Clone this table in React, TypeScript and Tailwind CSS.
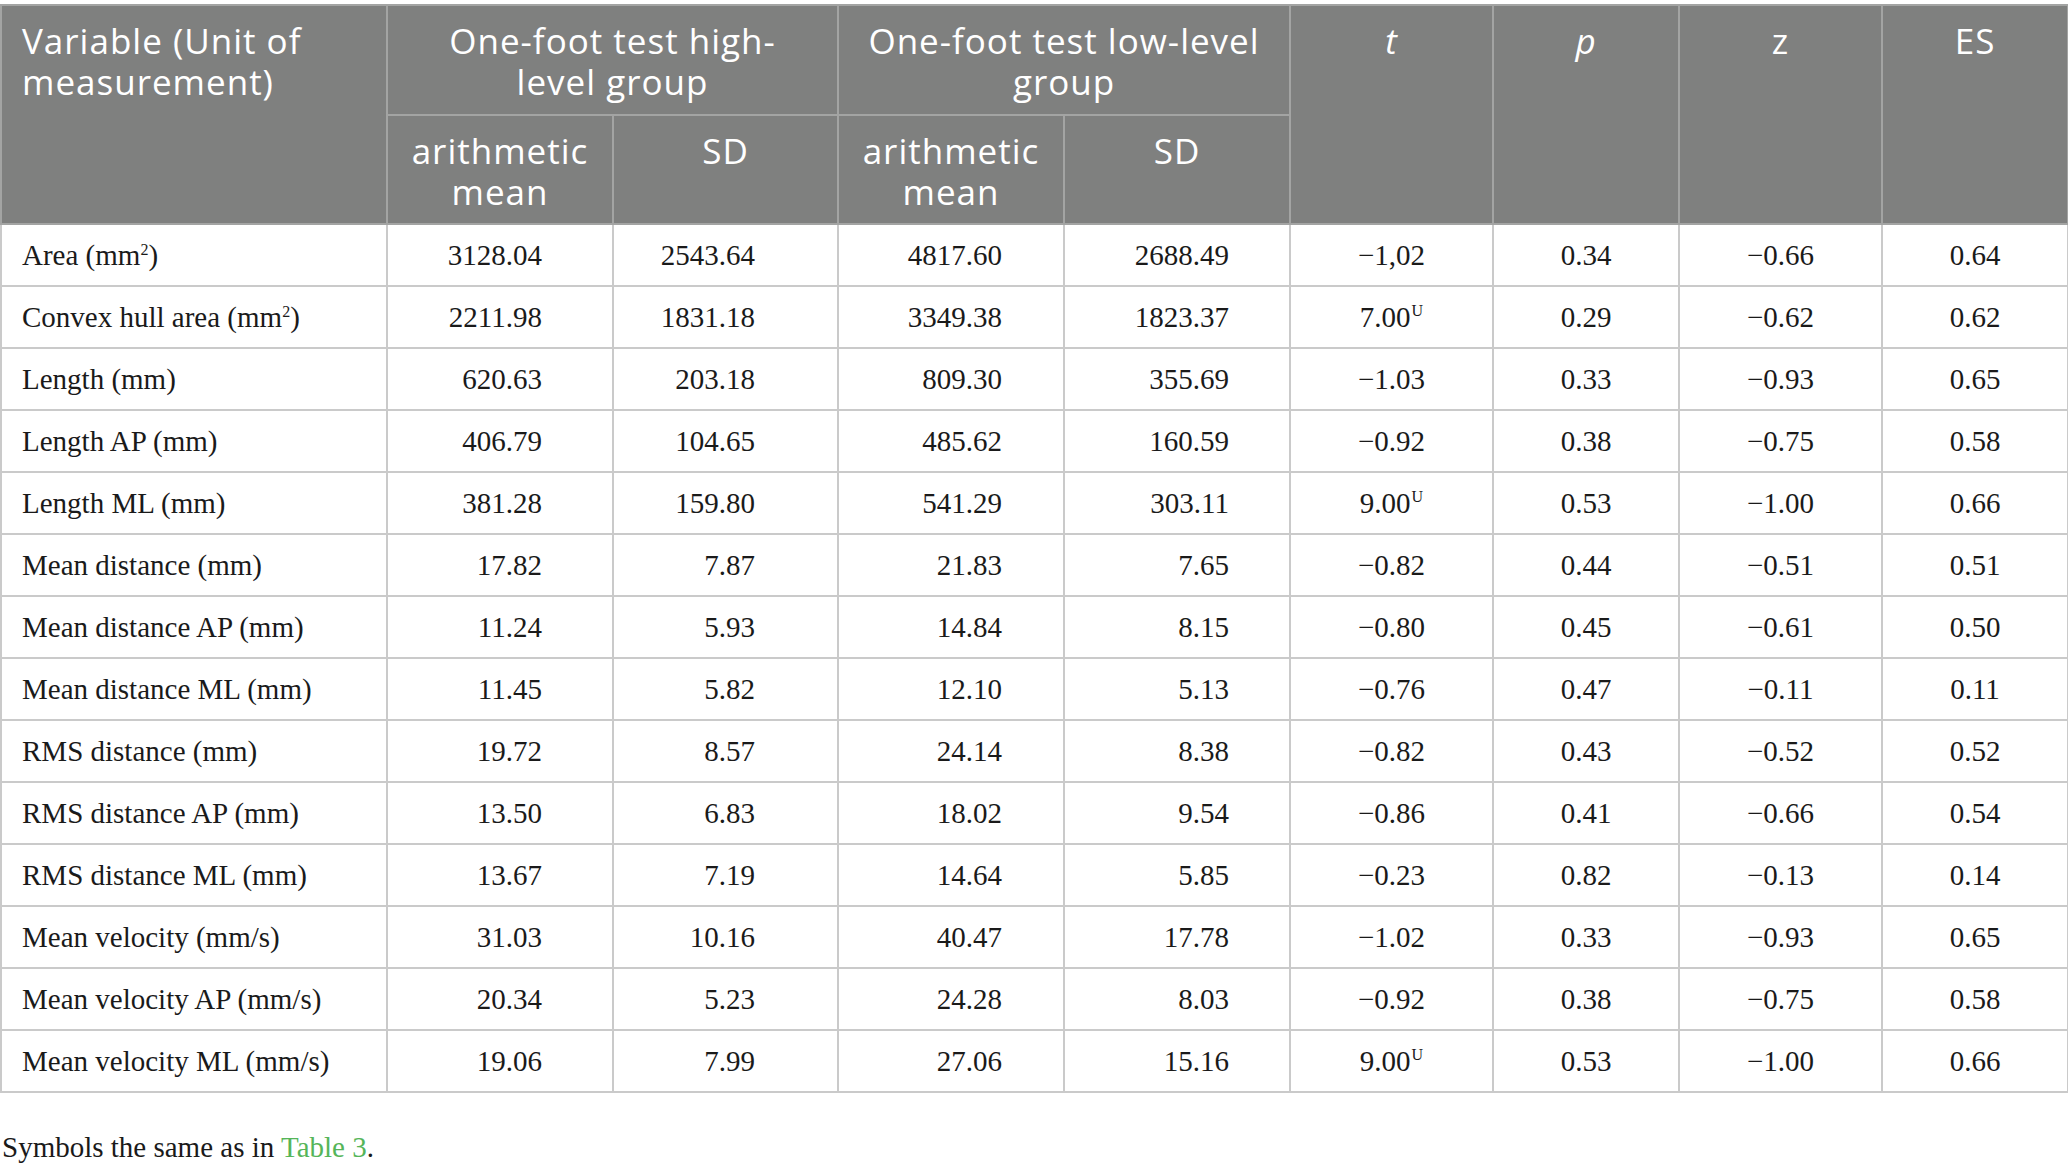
import React from "react";

type Row = {
  label: React.ReactNode;
  v: [string, string, string, string];
  t: React.ReactNode;
  p: string;
  z: string;
  es: string;
};

const U = (n: string) => (
  <>
    {n}
    <span className="text-[16px] relative top-[-11px] ml-[1px]">U</span>
  </>
);
const mm2 = (s: string) => (
  <>
    {s} (mm<span className="text-[16px] relative top-[-10px]">2</span>)
  </>
);

const rows: Row[] = [
  { label: mm2("Area"), v: ["3128.04", "2543.64", "4817.60", "2688.49"], t: "−1,02", p: "0.34", z: "−0.66", es: "0.64" },
  { label: mm2("Convex hull area"), v: ["2211.98", "1831.18", "3349.38", "1823.37"], t: U("7.00"), p: "0.29", z: "−0.62", es: "0.62" },
  { label: "Length (mm)", v: ["620.63", "203.18", "809.30", "355.69"], t: "−1.03", p: "0.33", z: "−0.93", es: "0.65" },
  { label: "Length AP (mm)", v: ["406.79", "104.65", "485.62", "160.59"], t: "−0.92", p: "0.38", z: "−0.75", es: "0.58" },
  { label: "Length ML (mm)", v: ["381.28", "159.80", "541.29", "303.11"], t: U("9.00"), p: "0.53", z: "−1.00", es: "0.66" },
  { label: "Mean distance (mm)", v: ["17.82", "7.87", "21.83", "7.65"], t: "−0.82", p: "0.44", z: "−0.51", es: "0.51" },
  { label: "Mean distance AP (mm)", v: ["11.24", "5.93", "14.84", "8.15"], t: "−0.80", p: "0.45", z: "−0.61", es: "0.50" },
  { label: "Mean distance ML (mm)", v: ["11.45", "5.82", "12.10", "5.13"], t: "−0.76", p: "0.47", z: "−0.11", es: "0.11" },
  { label: "RMS distance (mm)", v: ["19.72", "8.57", "24.14", "8.38"], t: "−0.82", p: "0.43", z: "−0.52", es: "0.52" },
  { label: "RMS distance AP (mm)", v: ["13.50", "6.83", "18.02", "9.54"], t: "−0.86", p: "0.41", z: "−0.66", es: "0.54" },
  { label: "RMS distance ML (mm)", v: ["13.67", "7.19", "14.64", "5.85"], t: "−0.23", p: "0.82", z: "−0.13", es: "0.14" },
  { label: "Mean velocity (mm/s)", v: ["31.03", "10.16", "40.47", "17.78"], t: "−1.02", p: "0.33", z: "−0.93", es: "0.65" },
  { label: "Mean velocity AP (mm/s)", v: ["20.34", "5.23", "24.28", "8.03"], t: "−0.92", p: "0.38", z: "−0.75", es: "0.58" },
  { label: "Mean velocity ML (mm/s)", v: ["19.06", "7.99", "27.06", "15.16"], t: U("9.00"), p: "0.53", z: "−1.00", es: "0.66" },
];

const th =
  "bg-[#7f807f] text-white font-normal align-top border-2 border-[#a3a4a3] text-center leading-[41px] pt-[14px] px-1";

const td = "border-2 border-[#cacaca] h-[62px] align-middle pt-[2px] pb-0";

export default function App() {
  return (
    <div className="w-[2068px] bg-white pt-[4px]">
      <table
        className="table-fixed border-collapse w-[2067px] text-[#1a1a1a]"
        style={{ fontFamily: "'Liberation Serif', 'Times New Roman', serif" }}
      >
        <colgroup>
          <col className="w-[386px]" />
          <col className="w-[226px]" />
          <col className="w-[225px]" />
          <col className="w-[226px]" />
          <col className="w-[226px]" />
          <col className="w-[203px]" />
          <col className="w-[186px]" />
          <col className="w-[203px]" />
          <col className="w-[186px]" />
        </colgroup>
        <thead
          className="text-[35px] tracking-[1px]"
          style={{ fontFamily: "'Open Sans', 'Noto Sans', sans-serif" }}
        >
          <tr className="h-[110px]">
            <th rowSpan={2} className={`${th} !text-left !pl-[20px]`}>
              Variable (Unit of
              <br />
              measurement)
            </th>
            <th colSpan={2} className={th}>
              One-foot test high-
              <br />
              level group
            </th>
            <th colSpan={2} className={th}>
              One-foot test low-level
              <br />
              group
            </th>
            <th rowSpan={2} className={th}>
              <i>t</i>
            </th>
            <th rowSpan={2} className={th}>
              <i>p</i>
            </th>
            <th rowSpan={2} className={th}>
              z
            </th>
            <th rowSpan={2} className={th}>
              ES
            </th>
          </tr>
          <tr className="h-[109px]">
            <th className={th}>
              arithmetic
              <br />
              mean
            </th>
            <th className={th}>SD</th>
            <th className={th}>
              arithmetic
              <br />
              mean
            </th>
            <th className={th}>SD</th>
          </tr>
        </thead>
        <tbody className="text-[29px]">
          {rows.map((r, i) => (
            <tr key={i}>
              <td className={`${td} pl-[20px] text-left`}>{r.label}</td>
              <td className={`${td} text-right pr-[70px]`}>{r.v[0]}</td>
              <td className={`${td} text-right pr-[82px]`}>{r.v[1]}</td>
              <td className={`${td} text-right pr-[61px]`}>{r.v[2]}</td>
              <td className={`${td} text-right pr-[60px]`}>{r.v[3]}</td>
              <td className={`${td} text-center`}>{r.t}</td>
              <td className={`${td} text-center`}>{r.p}</td>
              <td className={`${td} text-center`}>{r.z}</td>
              <td className={`${td} text-center`}>{r.es}</td>
            </tr>
          ))}
        </tbody>
      </table>
      <div
        className="mt-[36px] pl-[2px] text-[29px] leading-[36px] text-[#1a1a1a]"
        style={{ fontFamily: "'Liberation Serif', 'Times New Roman', serif" }}
      >
        Symbols the same as in <span className="text-[#55b559]">Table 3</span>.
      </div>
    </div>
  );
}
